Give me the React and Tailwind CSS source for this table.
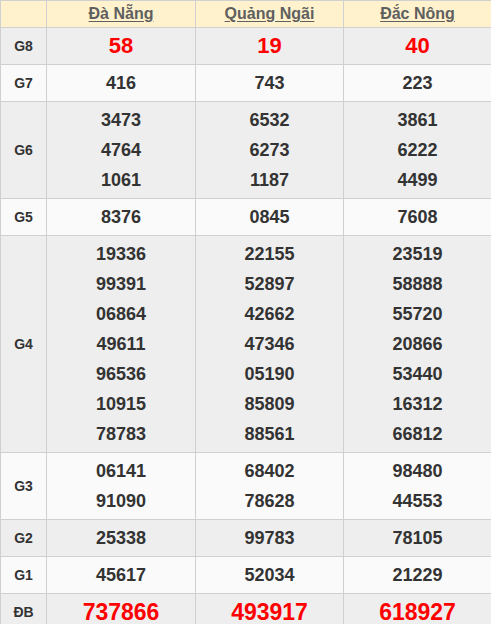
import React from "react";

const rows = [
  { label: "G8", vals: [["58"], ["19"], ["40"]], red: true, size: "text-[22px]" },
  { label: "G7", vals: [["416"], ["743"], ["223"]] },
  { label: "G6", vals: [["3473", "4764", "1061"], ["6532", "6273", "1187"], ["3861", "6222", "4499"]] },
  { label: "G5", vals: [["8376"], ["0845"], ["7608"]] },
  {
    label: "G4",
    vals: [
      ["19336", "99391", "06864", "49611", "96536", "10915", "78783"],
      ["22155", "52897", "42662", "47346", "05190", "85809", "88561"],
      ["23519", "58888", "55720", "20866", "53440", "16312", "66812"],
    ],
  },
  { label: "G3", vals: [["06141", "91090"], ["68402", "78628"], ["98480", "44553"]] },
  { label: "G2", vals: [["25338"], ["99783"], ["78105"]] },
  { label: "G1", vals: [["45617"], ["52034"], ["21229"]] },
  { label: "ĐB", vals: [["737866"], ["493917"], ["618927"]], red: true, size: "text-[23px]" },
];

const heads = ["Đà Nẵng", "Quảng Ngãi", "Đắc Nông"];

export default function App() {
  return (
    <div className="w-[491px] h-[624px] bg-white font-['Liberation_Sans',Arial,sans-serif]">
      <table className="w-[491px] border-collapse table-fixed border border-[#c8c8c8] font-['Liberation_Sans',Arial,sans-serif]">
        <colgroup>
          <col className="w-[46px]" />
          <col className="w-[149px]" />
          <col className="w-[148px]" />
          <col className="w-[148px]" />
        </colgroup>
        <thead>
          <tr className="bg-[#fff2cc] h-[27px]">
            <th className="border border-[#d0d0d0] p-0"></th>
            {heads.map((h) => (
              <th key={h} className="border border-[#d0d0d0] p-0 text-center align-middle">
                <span className="underline text-[16px] font-bold text-[#5f5f5f] leading-[20px] underline-offset-[2px]">{h}</span>
              </th>
            ))}
          </tr>
        </thead>
        <tbody>
          {rows.map((r, i) => (
            <tr key={r.label} className={i % 2 === 0 ? "bg-[#eeeeee]" : "bg-[#fafafa]"}>
              <td className="border border-[#d0d0d0] text-center align-middle text-[14px] font-bold text-[#333] p-0">{r.label}</td>
              {r.vals.map((col, j) => (
                <td key={j} className="border border-[#d0d0d0] text-center align-middle py-[3px] px-0">
                  {col.map((v) => (
                    <div
                      key={v}
                      className={
                        r.red
                          ? `leading-[30px] font-bold text-[#ff0000] ${r.size}`
                          : "leading-[30px] font-bold text-[#333333] text-[18px]"
                      }
                    >
                      {v}
                    </div>
                  ))}
                </td>
              ))}
            </tr>
          ))}
        </tbody>
      </table>
    </div>
  );
}
